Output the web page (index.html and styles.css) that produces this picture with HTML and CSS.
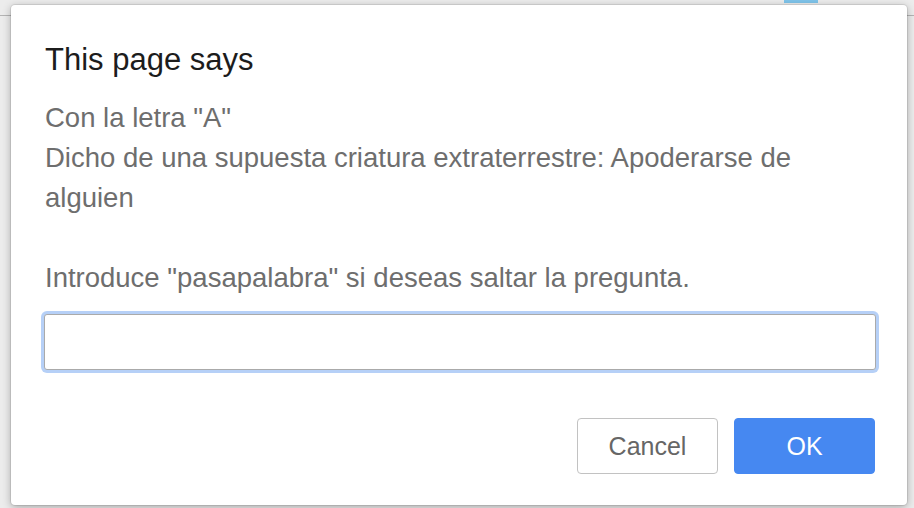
FILE: index.html
```html
<!DOCTYPE html>
<html>
<head>
<meta charset="utf-8">
<link rel="stylesheet" href="styles.css">
</head>
<body>
<div class="topbar"><span class="tab-accent"></span></div>
<div class="dialog">
  <h1 class="title">This page says</h1>
  <div class="message">
    <p>Con la letra "A"</p>
    <p>Dicho de una supuesta criatura extraterrestre: Apoderarse de alguien</p>
    <p class="blank">&nbsp;</p>
    <p>Introduce "pasapalabra" si deseas saltar la pregunta.</p>
  </div>
  <div class="field"><input class="input" type="text"></div>
  <div class="actions">
    <button class="btn btn-cancel">Cancel</button>
    <button class="btn btn-ok">OK</button>
  </div>
</div>
</body>
</html>
```
FILE: styles.css
```css
html, body {
  margin: 0;
  padding: 0;
  width: 914px;
  height: 508px;
  overflow: hidden;
  background: #ececec;
  font-family: "Liberation Sans", Arial, sans-serif;
}
body {
  position: relative;
}
.topbar {
  height: 15px;
  border-bottom: 1px solid #b4b4b4;
  position: relative;
}
.tab-accent {
  position: absolute;
  left: 784px;
  top: 0;
  width: 34px;
  height: 3px;
  background: #7fc4ea;
}
.dialog {
  position: absolute;
  left: 11px;
  top: 5px;
  width: 896px;
  height: 500px;
  box-sizing: border-box;
  background: #fff;
  border-radius: 4px;
  box-shadow: 0 0 0 1px rgba(0,0,0,0.08), 0 2px 8px rgba(0,0,0,0.3);
  padding: 37px 31px 0 34px;
}
.title {
  margin: 0;
  font-size: 31px;
  font-weight: normal;
  color: #1c1c1c;
  line-height: 36px;
}
.message {
  margin-top: 20px;
  color: #6e6e6e;
  font-size: 27.5px;
  line-height: 40px;
  width: 790px;
}
.message p {
  margin: 0;
}
.field {
  margin-top: 16px;
  margin-left: -1px;
}
.input {
  display: block;
  box-sizing: border-box;
  width: 832px;
  height: 56px;
  border: 1px solid #aaaaaa;
  border-radius: 3px;
  outline: none;
  box-shadow: 0 0 0 3px #b6d0f7;
  margin: 0;
  font-size: 22px;
}
.actions {
  display: flex;
  justify-content: flex-end;
  gap: 16px;
  margin-top: 48px;
  padding-right: 1px;
}
.btn {
  width: 141px;
  height: 56px;
  box-sizing: border-box;
  border-radius: 4px;
  font-family: "Liberation Sans", Arial, sans-serif;
  font-size: 25px;
  cursor: pointer;
}
.btn-cancel {
  background: #fff;
  border: 1px solid #c2c2c2;
  color: #666;
}
.btn-ok {
  background: #4688f1;
  border: 1px solid #4688f1;
  color: #fff;
}
```
